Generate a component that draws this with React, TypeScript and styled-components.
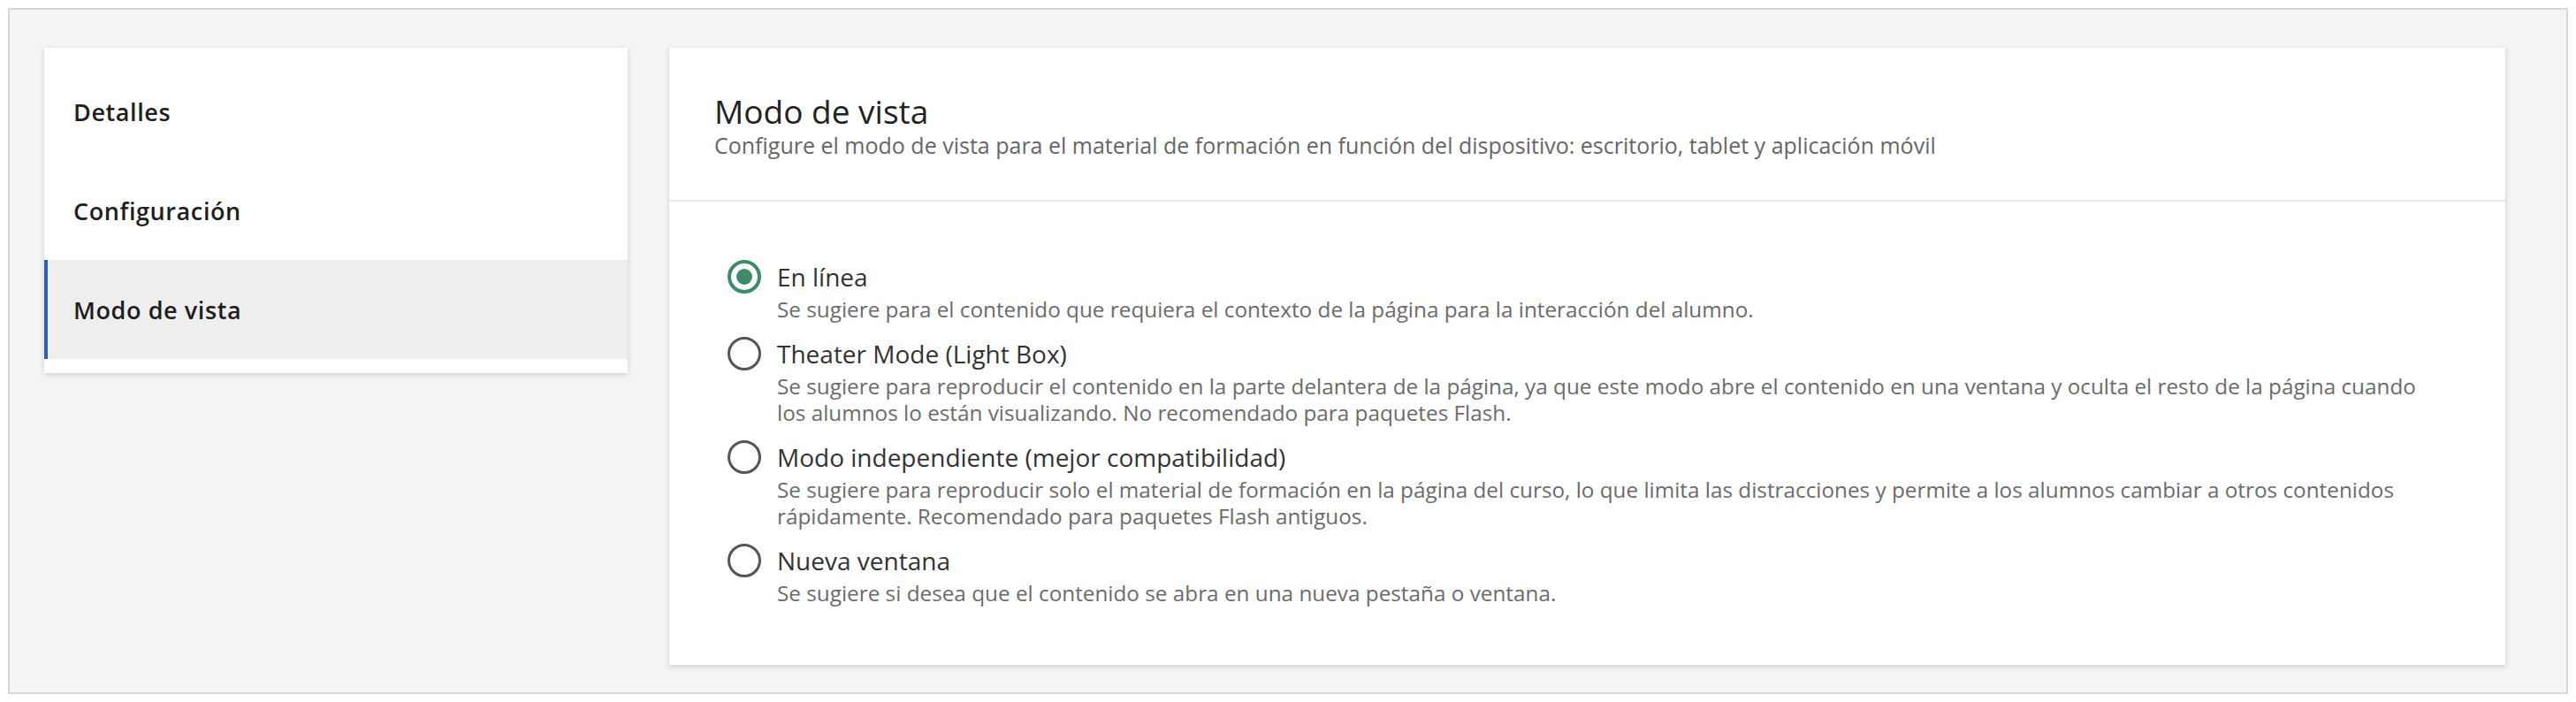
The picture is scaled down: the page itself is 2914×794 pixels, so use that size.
import { useState, type ReactElement } from "react";
import { createGlobalStyle, styled } from "styled-components";

const GlobalStyle = createGlobalStyle`
  html, body {
    margin: 0;
    padding: 0;
    background: #ffffff;
  }
  body {
    font-family: "Open Sans", "Noto Sans", "Liberation Sans", sans-serif;
    color: #222222;
  }
`;

const Page = styled.div`
  padding: 9px;
`;

const Frame = styled.div`
  display: flex;
  align-items: flex-start;
  gap: 47px;
  height: 776px;
  box-sizing: border-box;
  padding: 43px 69px 31px 39px;
  background: #f4f4f4;
  border: 2px solid #d6d6d6;
`;

const Card = styled.div`
  background: #ffffff;
  box-shadow: 0 2px 6px rgba(0, 0, 0, 0.16);
`;

const Sidebar = styled(Card)`
  width: 660px;
  flex-shrink: 0;
  padding: 16px 0;
`;

const NavItem = styled.div<{ $active?: boolean }>`
  display: flex;
  align-items: center;
  height: 112px;
  padding-left: 33px;
  font-size: 27px;
  font-weight: 600;
  letter-spacing: 0.6px;
  color: #1e1e1e;
  cursor: pointer;
  background: ${p => (p.$active ? "#eeeeee" : "transparent")};
  box-shadow: ${p => (p.$active ? "inset 4px 0 0 #2f5fb3" : "none")};
`;

const Main = styled(Card)`
  flex: 1;
  height: 698px;
  box-sizing: border-box;
`;

const Header = styled.div`
  padding: 50px 51px 46px;
  border-bottom: 2px solid #e8e8e8;
`;

const Title = styled.h1`
  margin: 0;
  font-size: 37px;
  line-height: 44px;
  font-weight: 400;
  color: #222222;
`;

const Subtitle = styled.div`
  font-size: 25px;
  line-height: 32px;
  color: #666666;
`;

const Options = styled.div`
  display: flex;
  flex-direction: column;
  gap: 16px;
  padding: 66px 76px 66px 66px;
`;

const Option = styled.label`
  display: grid;
  grid-template-columns: 38px 1fr;
  column-gap: 18px;
  cursor: pointer;
`;

const Radio = styled.input.attrs({ type: "radio" })`
  appearance: none;
  margin: 0;
  width: 38px;
  height: 38px;
  box-sizing: border-box;
  border-radius: 50%;
  border: 3px solid #555555;
  display: grid;
  place-items: center;
  cursor: pointer;

  &:checked {
    border: 4px solid #3d8b6b;
  }
  &:checked::after {
    content: "";
    width: 18px;
    height: 18px;
    border-radius: 50%;
    background: #3d8b6b;
  }
`;

const OptionText = styled.div`
  display: flex;
  flex-direction: column;
  gap: 3px;
`;

const OptionLabel = styled.span`
  font-size: 28px;
  line-height: 38px;
  color: #333333;
`;

const OptionHint = styled.span`
  font-size: 24.3px;
  line-height: 30px;
  color: #6b6b6b;
`;

const NAV = ["Detalles", "Configuración", "Modo de vista"];

const MODES = [
  {
    id: "inline",
    label: "En línea",
    hint: "Se sugiere para el contenido que requiera el contexto de la página para la interacción del alumno.",
  },
  {
    id: "theater",
    label: "Theater Mode (Light Box)",
    hint: "Se sugiere para reproducir el contenido en la parte delantera de la página, ya que este modo abre el contenido en una ventana y oculta el resto de la página cuando los alumnos lo están visualizando. No recomendado para paquetes Flash.",
  },
  {
    id: "standalone",
    label: "Modo independiente (mejor compatibilidad)",
    hint: "Se sugiere para reproducir solo el material de formación en la página del curso, lo que limita las distracciones y permite a los alumnos cambiar a otros contenidos rápidamente. Recomendado para paquetes Flash antiguos.",
  },
  {
    id: "window",
    label: "Nueva ventana",
    hint: "Se sugiere si desea que el contenido se abra en una nueva pestaña o ventana.",
  },
];

export default function App(): ReactElement {
  const [section, setSection] = useState("Modo de vista");
  const [mode, setMode] = useState("inline");

  return (
    <>
      <GlobalStyle />
      <Page>
        <Frame>
          <Sidebar>
            {NAV.map(item => (
              <NavItem
                key={item}
                $active={item === section}
                onClick={() => setSection(item)}
              >
                {item}
              </NavItem>
            ))}
          </Sidebar>
          <Main>
            <Header>
              <Title>Modo de vista</Title>
              <Subtitle>
                Configure el modo de vista para el material de formación en
                función del dispositivo: escritorio, tablet y aplicación móvil
              </Subtitle>
            </Header>
            <Options>
              {MODES.map(m => (
                <Option key={m.id}>
                  <Radio
                    name="view-mode"
                    checked={mode === m.id}
                    onChange={() => setMode(m.id)}
                  />
                  <OptionText>
                    <OptionLabel>{m.label}</OptionLabel>
                    <OptionHint>{m.hint}</OptionHint>
                  </OptionText>
                </Option>
              ))}
            </Options>
          </Main>
        </Frame>
      </Page>
    </>
  );
}
